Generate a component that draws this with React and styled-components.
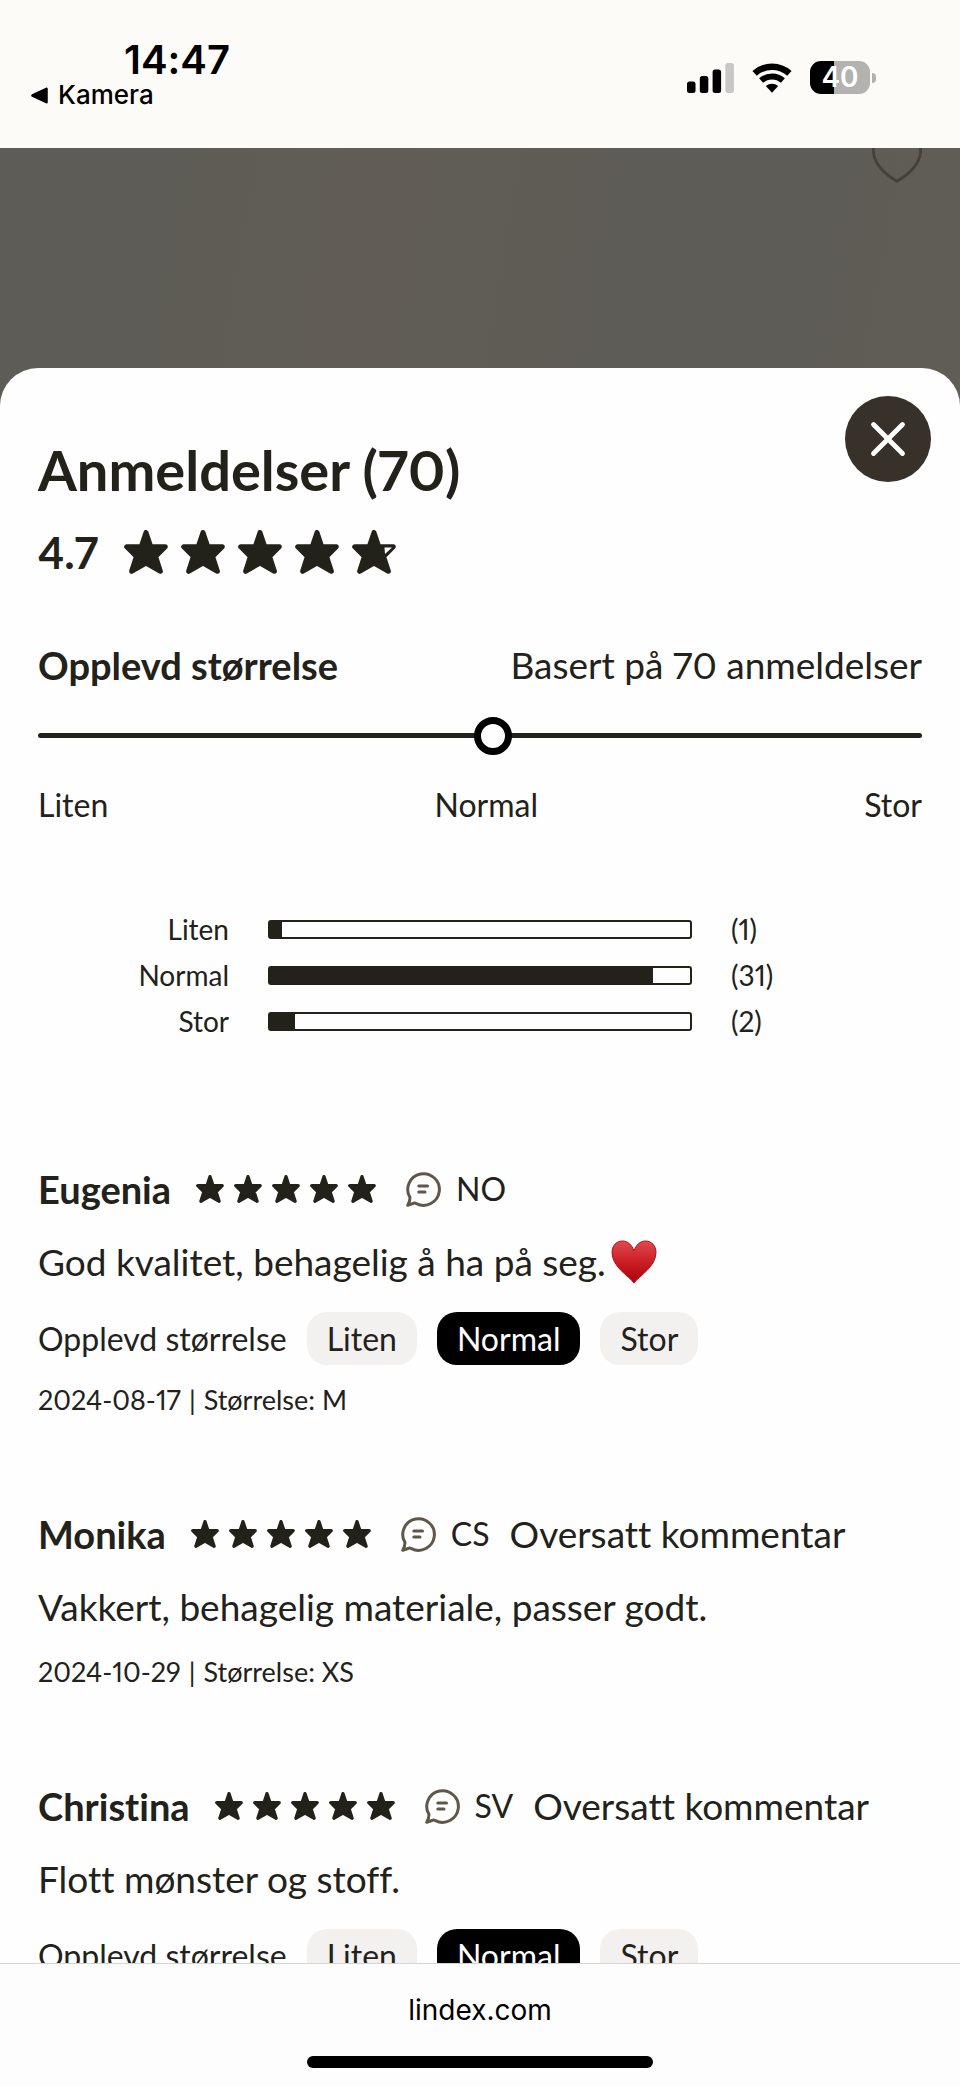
import React, { useState } from "react";
import styled, { createGlobalStyle } from "styled-components";

const GlobalStyle = createGlobalStyle`
  * {
    box-sizing: border-box;
  }

  body {
    margin: 0;
    font-family: Lato, "Liberation Sans", sans-serif;
    font-variant-numeric: proportional-nums;
    font-variant-ligatures: none;
    color: #22211a;
  }
`;

const Screen = styled.div`
  display: flex;
  flex-direction: column;
  height: 100vh;
`;

const StatusBar = styled.header`
  display: flex;
  flex-shrink: 0;
  justify-content: space-between;
  align-items: flex-start;
  height: 148px;
  padding: 40px 84px 0 31px;
  background: #fcfbf7;
  color: #000;
  font-family: Inter, "Liberation Sans", sans-serif;
`;

const Clock = styled.div`
  padding-left: 93px;
  font-size: 40px;
  line-height: 40px;
  font-weight: 600;
`;

const BackLink = styled.a`
  display: flex;
  align-items: center;
  gap: 10px;
  font-size: 26px;
  line-height: 30px;
  font-weight: 500;
  color: inherit;
  text-decoration: none;
`;

const StatusIcons = styled.div`
  display: flex;
  align-items: center;
  gap: 18px;
  padding-top: 21px;
`;

const Battery = styled.div`
  display: flex;
  align-items: center;
  gap: 2px;
`;

const BatteryBody = styled.div`
  width: 60px;
  border-radius: 11px;
  background: linear-gradient(to right, #000 40%, #b2b2b0 40%);
  color: #fff;
  text-align: center;
  font-size: 28px;
  line-height: 33px;
  font-weight: 600;
`;

const BatteryTip = styled.div`
  width: 4px;
  height: 10px;
  border-radius: 0 5px 5px 0;
  background: #b2b2b0;
`;

const Overlay = styled.div`
  display: flex;
  flex: 1;
  flex-direction: column;
  min-height: 0;
  background: linear-gradient(100deg, #5d5c57, #615d56 30%, #5e5c57 55%, #625e56);
`;

const PageBehind = styled.div`
  display: flex;
  flex-shrink: 0;
  justify-content: flex-end;
  align-items: flex-start;
  height: 220px;
  padding-right: 38px;
`;

const Sheet = styled.main`
  flex: 1;
  min-height: 0;
  overflow-y: auto;
  scrollbar-width: none;
  border-radius: 38px 38px 0 0;
  background: #fefefe;
`;

const SheetHeader = styled.div`
  display: flex;
  justify-content: space-between;
  align-items: flex-start;
  padding: 28px 29px 0 38px;
`;

const Title = styled.h1`
  margin: 42px 0 0;
  font-size: 56px;
  line-height: 64px;
  font-weight: 700;
`;

const CloseButton = styled.button`
  display: flex;
  align-items: center;
  justify-content: center;
  width: 86px;
  height: 86px;
  padding: 0;
  border: none;
  border-radius: 50%;
  background: #37312a;
  cursor: pointer;
`;

const Content = styled.div`
  padding: 28px 38px;
`;

const Rating = styled.div`
  display: flex;
  align-items: center;
  gap: 26px;
  font-size: 44px;
  line-height: 44px;
  font-weight: 700;
`;

const StarRow = styled.div`
  display: flex;
  gap: ${(props) => props.$gap}px;
`;

const SizeHeader = styled.div`
  display: flex;
  justify-content: space-between;
  margin-top: 67px;
  font-size: 37px;
  line-height: 48px;
`;

const SizeTitle = styled.strong`
  font-size: 38px;
  font-weight: 700;
`;

const Slider = styled.input`
  display: block;
  appearance: none;
  width: 100%;
  height: 38px;
  margin: 27px 0 0;
  background: transparent;

  &::-webkit-slider-runnable-track {
    height: 5px;
    border-radius: 3px;
    background: #22211a;
  }

  &::-webkit-slider-thumb {
    appearance: none;
    width: 38px;
    height: 38px;
    margin-top: -16px;
    border: 7px solid #000;
    border-radius: 50%;
    background: #fefefe;
  }
`;

const SliderLabels = styled.div`
  display: flex;
  justify-content: space-between;
  margin-top: 31px;
  font-size: 32px;
  line-height: 40px;
`;

const Distribution = styled.div`
  margin-top: 81px;
`;

const DistributionRow = styled.div`
  display: grid;
  grid-template-columns: 191fr 424fr 191fr;
  column-gap: 39px;
  align-items: center;
  font-size: 28px;
  line-height: 46px;
`;

const DistributionLabel = styled.span`
  text-align: right;
`;

const Bar = styled.div`
  height: 19px;
  border: 2px solid #22211a;
  border-radius: 3px;
`;

const BarFill = styled.div`
  height: 100%;
  background: #22211a;
`;

const Reviews = styled.section`
  display: flex;
  flex-direction: column;
  gap: 92px;
  margin-top: 121px;
`;

const ReviewHeader = styled.div`
  display: flex;
  align-items: center;
  font-size: 37px;
  line-height: 48px;
`;

const Name = styled.h2`
  margin: 0 25px 0 0;
  font-size: 38px;
  font-weight: 700;
`;

const Language = styled.span`
  display: flex;
  align-items: center;
  gap: 15px;
  margin: 0 20px 0 30px;
  font-size: 32px;
`;

const Comment = styled.p`
  display: flex;
  align-items: center;
  gap: 5px;
  margin: 25px 0 0;
  font-size: 37px;
  line-height: 48px;
`;

const Chips = styled.div`
  display: flex;
  align-items: center;
  gap: 20px;
  margin-top: 26px;
  font-size: 32px;
  line-height: 53px;
`;

const Chip = styled.span`
  padding: 0 20px;
  border-radius: 20px;
  background: ${(props) => (props.$active ? "#000" : "#f3f1f0")};
  color: ${(props) => (props.$active ? "#fff" : "inherit")};
`;

const Meta = styled.div`
  display: flex;
  gap: 8px;
  margin-top: ${(props) => props.$top}px;
  font-size: 27px;
  line-height: 36px;
`;

const BrowserBar = styled.footer`
  display: flex;
  flex-direction: column;
  flex-shrink: 0;
  align-items: center;
  padding: 28px 0 19px;
  border-top: 1px solid #d4d4d4;
  background: #fdfdfd;
  color: #000;
  font-family: Inter, "Liberation Sans", sans-serif;
  font-size: 28px;
  line-height: 36px;
`;

const HomeIndicator = styled.div`
  width: 36%;
  height: 12px;
  margin-top: 28px;
  border-radius: 6px;
  background: #000;
`;

const sizes = ["Liten", "Normal", "Stor"];

const distribution = [
  { label: "Liten", count: 1 },
  { label: "Normal", count: 31 },
  { label: "Stor", count: 2 },
];

const reviews = [
  {
    name: "Eugenia",
    lang: "NO",
    text: "God kvalitet, behagelig å ha på seg.",
    heart: true,
    fit: "Normal",
    date: "2024-08-17",
    size: "M",
  },
  {
    name: "Monika",
    lang: "CS",
    translated: true,
    text: "Vakkert, behagelig materiale, passer godt.",
    date: "2024-10-29",
    size: "XS",
  },
  {
    name: "Christina",
    lang: "SV",
    translated: true,
    text: "Flott mønster og stoff.",
    fit: "Normal",
  },
];

function Star({ size, partial }) {
  return (
    <svg width={size} height={size} viewBox="0 0 44 44">
      <path
        d="M22 2.5 26.8 16.8H41.3L31.6 26.5 36.4 41.3 22 33 7.6 41.3 12.4 26.5 2.7 16.8H17.2Z"
        fill="#22211a"
        stroke="#22211a"
        strokeWidth="5"
        strokeLinejoin="round"
      />
      {partial && <path d="M32.5 17.5H40L33 24Z" fill="#fefefe" />}
    </svg>
  );
}

function Stars({ size, gap, partial }) {
  return (
    <StarRow $gap={gap}>
      {[1, 2, 3, 4, 5].map((n) => (
        <Star key={n} size={size} partial={partial && n === 5} />
      ))}
    </StarRow>
  );
}

function CommentIcon() {
  return (
    <svg
      width="35"
      height="35"
      viewBox="0 0 35 35"
      fill="none"
      stroke="#5f5749"
      strokeWidth="3"
      strokeLinecap="round"
      strokeLinejoin="round"
    >
      <path d="M4 25.6A15.8 15.8 0 1 1 10.4 31.6Q8.5 30.6 7 31.5L1.7 33.3Q4 29.5 4 25.6Z" />
      <path d="M12.8 13.9H21.5M12.8 20H19" />
    </svg>
  );
}

function HeartEmoji() {
  return (
    <svg width="46" height="44" viewBox="0 0 46 44">
      <defs>
        <linearGradient id="heart" x1="0" y1="0" x2="0" y2="1">
          <stop offset="0" stopColor="#e04a50" />
          <stop offset="0.45" stopColor="#cc2228" />
          <stop offset="1" stopColor="#b00006" />
        </linearGradient>
      </defs>
      <path
        d="M23 43C18 36 1 27 1 12.5C1 5.5 5.5 1 11.5 1C17 1 21 5 23 11C25 5 29 1 34.5 1C40.5 1 45 5.5 45 12.5C45 27 28 36 23 43Z"
        fill="url(#heart)"
        stroke="#a8161c"
        strokeWidth="1"
      />
    </svg>
  );
}

function Review({ review }) {
  return (
    <article>
      <ReviewHeader>
        <Name>{review.name}</Name>
        <Stars size={28} gap={10} />
        <Language>
          <CommentIcon />
          {review.lang}
        </Language>
        {review.translated && <span>Oversatt kommentar</span>}
      </ReviewHeader>
      <Comment>
        {review.text}
        {review.heart && <HeartEmoji />}
      </Comment>
      {review.fit && (
        <Chips>
          <span>Opplevd størrelse</span>
          {sizes.map((size) => (
            <Chip key={size} $active={size === review.fit}>
              {size}
            </Chip>
          ))}
        </Chips>
      )}
      {review.date && (
        <Meta $top={review.fit ? 17 : 23}>
          <span>{review.date}</span>
          <span>|</span>
          <span>Størrelse: {review.size}</span>
        </Meta>
      )}
    </article>
  );
}

function App() {
  const [fit, setFit] = useState(515);
  const total = distribution.reduce((sum, row) => sum + row.count, 0);

  return (
    <Screen>
      <GlobalStyle />
      <StatusBar>
        <div>
          <Clock>14:47</Clock>
          <BackLink href="#kamera">
            <svg width="17" height="17" viewBox="0 0 17 17">
              <path
                d="M1.5 8.5 15.5 1.8V15.2Z"
                stroke="#000"
                strokeWidth="2.5"
                strokeLinejoin="round"
              />
            </svg>
            Kamera
          </BackLink>
        </div>
        <StatusIcons>
          <svg width="47" height="30" viewBox="0 0 47 30">
            <rect x="0" y="18.5" width="8.5" height="11.5" rx="2.5" />
            <rect x="12.8" y="13" width="8.5" height="17" rx="2.5" />
            <rect x="25.6" y="6.5" width="8.5" height="23.5" rx="2.5" />
            <rect x="38.4" y="0" width="8.5" height="30" rx="2.5" fill="#c7c7c4" />
          </svg>
          <svg width="40" height="30" viewBox="0 0 40 30" fill="none" stroke="#000">
            <path d="M2.6 10.4A26 26 0 0 1 37.4 10.4" strokeWidth="6.5" />
            <path d="M9.1 17.6A16.3 16.3 0 0 1 30.9 17.6" strokeWidth="6" />
            <path d="M20 29.7 13.8 23A9.3 9.3 0 0 1 26.2 23Z" fill="#000" stroke="none" />
          </svg>
          <Battery>
            <BatteryBody>40</BatteryBody>
            <BatteryTip />
          </Battery>
        </StatusIcons>
      </StatusBar>

      <Overlay>
        <PageBehind>
          <svg width="50" height="35" viewBox="0 0 50 35" fill="none">
            <path
              d="M1.5 0C0 14 12 26 25 33.2C38 26 50 14 48.5 0"
              stroke="#45403a"
              strokeWidth="2.8"
            />
          </svg>
        </PageBehind>
        <Sheet>
          <SheetHeader>
            <Title>Anmeldelser (70)</Title>
            <CloseButton aria-label="Lukk">
              <svg width="36" height="36" viewBox="0 0 36 36">
                <path
                  d="M3.5 3.5 32.5 32.5M32.5 3.5 3.5 32.5"
                  stroke="#fff"
                  strokeWidth="4.8"
                  strokeLinecap="round"
                />
              </svg>
            </CloseButton>
          </SheetHeader>
          <Content>
            <Rating>
              4.7
              <Stars size={44} gap={13} partial />
            </Rating>

            <SizeHeader>
              <SizeTitle>Opplevd størrelse</SizeTitle>
              <span>Basert på 70 anmeldelser</span>
            </SizeHeader>
            <Slider
              type="range"
              min="0"
              max="1000"
              aria-label="Opplevd størrelse"
              value={fit}
              onChange={(e) => setFit(e.target.value)}
            />
            <SliderLabels>
              {sizes.map((size) => (
                <span key={size}>{size}</span>
              ))}
            </SliderLabels>

            <Distribution>
              {distribution.map((row) => (
                <DistributionRow key={row.label}>
                  <DistributionLabel>{row.label}</DistributionLabel>
                  <Bar>
                    <BarFill style={{ width: `${(row.count / total) * 100}%` }} />
                  </Bar>
                  <span>({row.count})</span>
                </DistributionRow>
              ))}
            </Distribution>

            <Reviews>
              {reviews.map((review) => (
                <Review key={review.name} review={review} />
              ))}
            </Reviews>
          </Content>
        </Sheet>
      </Overlay>

      <BrowserBar>
        lindex.com
        <HomeIndicator />
      </BrowserBar>
    </Screen>
  );
}

export default App;
